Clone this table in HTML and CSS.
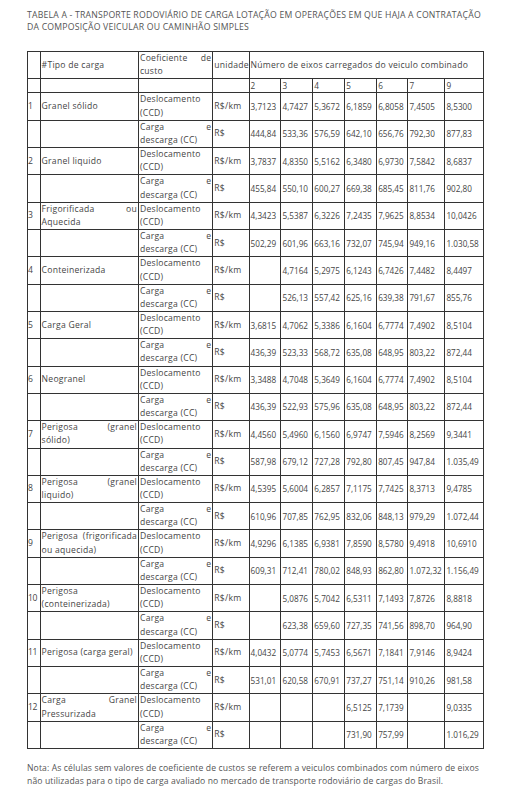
FILE: index.html
```html
<!DOCTYPE html>
<html lang="pt">
<head>
<meta charset="utf-8">
<link rel="stylesheet" href="styles.css">
</head>
<body>
<div class="page">
<p class="title">TABELA A - TRANSPORTE RODOVIÁRIO DE CARGA LOTAÇÃO EM OPERAÇÕES EM QUE HAJA A CONTRATAÇÃO DA COMPOSIÇÃO VEICULAR OU CAMINHÃO SIMPLES</p>
<table class="tbl">
<colgroup>
<col class="c-n"><col class="c-tipo"><col class="c-coef"><col class="c-un">
<col class="c-v"><col class="c-v"><col class="c-v"><col class="c-v"><col class="c-v6"><col class="c-v7"><col class="c-v9">
</colgroup>
<tr><td></td><td>#Tipo de carga</td><td class="j">Coeficiente de custo</td><td>unidade</td><td colspan="7" class="hd">Número de eixos carregados do veiculo combinado</td></tr>
<tr class="one"><td></td><td></td><td></td><td></td><td>2</td><td>3</td><td>4</td><td>5</td><td>6</td><td>7</td><td>9</td></tr>

<tr><td>1</td><td class="j">Granel sólido</td><td class="j">Deslocamento (CCD)</td><td>R$/km</td><td>3,7123</td><td>4,7427</td><td>5,3672</td><td>6,1859</td><td>6,8058</td><td>7,4505</td><td>8,5300</td></tr>
<tr><td></td><td></td><td class="j">Carga e descarga (CC)</td><td>R$</td><td>444,84</td><td>533,36</td><td>576,59</td><td>642,10</td><td>656,76</td><td>792,30</td><td>877,83</td></tr>

<tr><td>2</td><td class="j">Granel liquido</td><td class="j">Deslocamento (CCD)</td><td>R$/km</td><td>3,7837</td><td>4,8350</td><td>5,5162</td><td>6,3480</td><td>6,9730</td><td>7,5842</td><td>8,6837</td></tr>
<tr><td></td><td></td><td class="j">Carga e descarga (CC)</td><td>R$</td><td>455,84</td><td>550,10</td><td>600,27</td><td>669,38</td><td>685,45</td><td>811,76</td><td>902,80</td></tr>

<tr><td>3</td><td class="j">Frigorificada ou Aquecida</td><td class="j">Deslocamento (CCD)</td><td>R$/km</td><td>4,3423</td><td>5,5387</td><td>6,3226</td><td>7,2435</td><td>7,9625</td><td>8,8534</td><td>10,0426</td></tr>
<tr><td></td><td></td><td class="j">Carga e descarga (CC)</td><td>R$</td><td>502,29</td><td>601,96</td><td>663,16</td><td>732,07</td><td>745,94</td><td>949,16</td><td>1.030,58</td></tr>

<tr><td>4</td><td class="j">Conteinerizada</td><td class="j">Deslocamento (CCD)</td><td>R$/km</td><td></td><td>4,7164</td><td>5,2975</td><td>6,1243</td><td>6,7426</td><td>7,4482</td><td>8,4497</td></tr>
<tr><td></td><td></td><td class="j">Carga e descarga (CC)</td><td>R$</td><td></td><td>526,13</td><td>557,42</td><td>625,16</td><td>639,38</td><td>791,67</td><td>855,76</td></tr>

<tr><td>5</td><td class="j">Carga Geral</td><td class="j">Deslocamento (CCD)</td><td>R$/km</td><td>3,6815</td><td>4,7062</td><td>5,3386</td><td>6,1604</td><td>6,7774</td><td>7,4902</td><td>8,5104</td></tr>
<tr><td></td><td></td><td class="j">Carga e descarga (CC)</td><td>R$</td><td>436,39</td><td>523,33</td><td>568,72</td><td>635,08</td><td>648,95</td><td>803,22</td><td>872,44</td></tr>

<tr><td>6</td><td class="j">Neogranel</td><td class="j">Deslocamento (CCD)</td><td>R$/km</td><td>3,3488</td><td>4,7048</td><td>5,3649</td><td>6,1604</td><td>6,7774</td><td>7,4902</td><td>8,5104</td></tr>
<tr><td></td><td></td><td class="j">Carga e descarga (CC)</td><td>R$</td><td>436,39</td><td>522,93</td><td>575,96</td><td>635,08</td><td>648,95</td><td>803,22</td><td>872,44</td></tr>

<tr><td>7</td><td class="j">Perigosa (granel sólido)</td><td class="j">Deslocamento (CCD)</td><td>R$/km</td><td>4,4560</td><td>5,4960</td><td>6,1560</td><td>6,9747</td><td>7,5946</td><td>8,2569</td><td>9,3441</td></tr>
<tr><td></td><td></td><td class="j">Carga e descarga (CC)</td><td>R$</td><td>587,98</td><td>679,12</td><td>727,28</td><td>792,80</td><td>807,45</td><td>947,84</td><td>1.035,49</td></tr>

<tr><td>8</td><td class="j">Perigosa (granel liquido)</td><td class="j">Deslocamento (CCD)</td><td>R$/km</td><td>4,5395</td><td>5,6004</td><td>6,2857</td><td>7,1175</td><td>7,7425</td><td>8,3713</td><td>9,4785</td></tr>
<tr><td></td><td></td><td class="j">Carga e descarga (CC)</td><td>R$</td><td>610,96</td><td>707,85</td><td>762,95</td><td>832,06</td><td>848,13</td><td>979,29</td><td>1.072,44</td></tr>

<tr><td>9</td><td class="j">Perigosa (frigorificada ou aquecida)</td><td class="j">Deslocamento (CCD)</td><td>R$/km</td><td>4,9296</td><td>6,1385</td><td>6,9381</td><td>7,8590</td><td>8,5780</td><td>9,4918</td><td>10,6910</td></tr>
<tr><td></td><td></td><td class="j">Carga e descarga (CC)</td><td>R$</td><td>609,31</td><td>712,41</td><td>780,02</td><td>848,93</td><td>862,80</td><td>1.072,32</td><td>1.156,49</td></tr>

<tr><td>10</td><td>Perigosa (conteinerizada)</td><td class="j">Deslocamento (CCD)</td><td>R$/km</td><td></td><td>5,0876</td><td>5,7042</td><td>6,5311</td><td>7,1493</td><td>7,8726</td><td>8,8818</td></tr>
<tr><td></td><td></td><td class="j">Carga e descarga (CC)</td><td>R$</td><td></td><td>623,38</td><td>659,60</td><td>727,35</td><td>741,56</td><td>898,70</td><td>964,90</td></tr>

<tr><td>11</td><td class="j">Perigosa (carga geral)</td><td class="j">Deslocamento (CCD)</td><td>R$/km</td><td>4,0432</td><td>5,0774</td><td>5,7453</td><td>6,5671</td><td>7,1841</td><td>7,9146</td><td>8,9424</td></tr>
<tr><td></td><td></td><td class="j">Carga e descarga (CC)</td><td>R$</td><td>531,01</td><td>620,58</td><td>670,91</td><td>737,27</td><td>751,14</td><td>910,26</td><td>981,58</td></tr>

<tr><td>12</td><td class="j">Carga Granel Pressurizada</td><td class="j">Deslocamento (CCD)</td><td>R$/km</td><td></td><td></td><td></td><td>6,5125</td><td>7,1739</td><td></td><td>9,0335</td></tr>
<tr><td></td><td></td><td class="j">Carga e descarga (CC)</td><td>R$</td><td></td><td></td><td></td><td>731,90</td><td>757,99</td><td></td><td>1.016,29</td></tr>
</table>
<p class="note">Nota: As células sem valores de coeficiente de custos se referem a veiculos combinados com número de eixos não utilizadas para o tipo de carga avaliado no mercado de transporte rodoviário de cargas do Brasil.</p>
</div>
</body>
</html>
```
FILE: styles.css
```css
html, body {
  margin: 0;
  padding: 0;
  background: #ffffff;
}
.page {
  padding: 9px 27px 0 27px;
  font-family: "Open Sans", "Liberation Sans", sans-serif;
  color: #454545;
}
.title {
  margin: 0 0 18px 0;
  font-size: 8.7px;
  line-height: 12px;
  letter-spacing: 0.2px;
  color: #555555;
}
.tbl {
  width: 456px;
  table-layout: fixed;
  border-collapse: collapse;
  border: 1px solid #222;
  font-size: 8.6px;
  line-height: 13.15px;
  letter-spacing: 0.25px;
}
.tbl td {
  border: 1px solid #333;
  padding: 0 1px;
  vertical-align: middle;
  text-align: left;
  overflow: hidden;
  white-space: normal;
}
.tbl td:nth-child(n+5) {
  font-size: 8.2px;
  letter-spacing: 0;
}
.tbl td.hd {
  font-size: 8.6px;
  letter-spacing: 0.25px;
}
.tbl td.j {
  text-align: justify;
}
.c-n { width: 12.6px; }
.c-tipo { width: 98.4px; }
.c-coef { width: 74.3px; }
.c-un { width: 36.3px; }
.c-v { width: 31.9px; }
.c-v6 { width: 31.3px; }
.c-v7 { width: 37px; }
.c-v9 { width: 38.5px; }
.tbl td:nth-child(1) {
  padding: 0;
  letter-spacing: -0.3px;
}
.note {
  margin: 13px 0 0 0;
  font-size: 8.6px;
  line-height: 13px;
  letter-spacing: 0.12px;
  color: #555555;
}
```
